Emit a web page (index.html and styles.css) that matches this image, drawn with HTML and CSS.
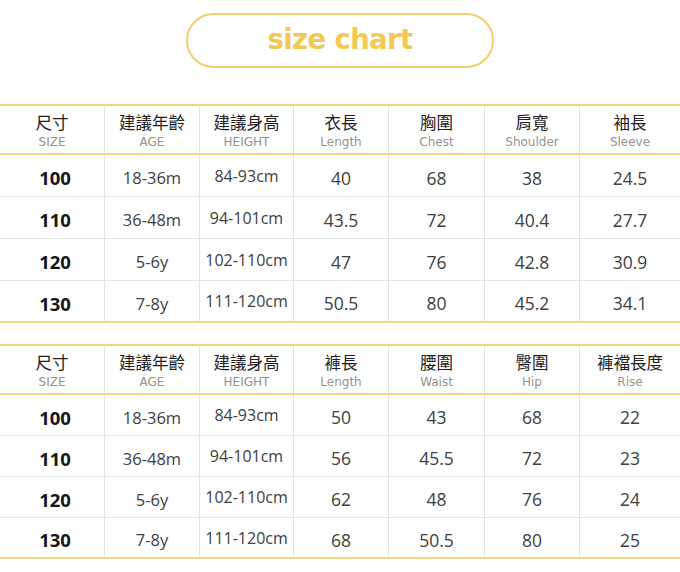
FILE: index.html
```html
<!DOCTYPE html>
<html lang="zh-Hant">
<head>
<meta charset="utf-8">
<title>size chart</title>
<link rel="stylesheet" href="styles.css">
</head>
<body>
<div class="sheet">
  <div class="title-wrap">
    <div class="pill">size chart</div>
  </div>

  <div class="chart chart-top">
    <div class="row head">
      <div class="cell"><span class="zh">尺寸</span><span class="en">SIZE</span></div>
      <div class="cell"><span class="zh">建議年齡</span><span class="en">AGE</span></div>
      <div class="cell"><span class="zh">建議身高</span><span class="en">HEIGHT</span></div>
      <div class="cell"><span class="zh">衣長</span><span class="en">Length</span></div>
      <div class="cell"><span class="zh">胸圍</span><span class="en">Chest</span></div>
      <div class="cell"><span class="zh">肩寬</span><span class="en">Shoulder</span></div>
      <div class="cell"><span class="zh">袖長</span><span class="en">Sleeve</span></div>
    </div>
    <div class="row data">
      <div class="cell size">100</div><div class="cell age">18-36m</div><div class="cell hgt">84-93cm</div><div class="cell">40</div><div class="cell">68</div><div class="cell">38</div><div class="cell">24.5</div>
    </div>
    <div class="row data">
      <div class="cell size">110</div><div class="cell age">36-48m</div><div class="cell hgt">94-101cm</div><div class="cell">43.5</div><div class="cell">72</div><div class="cell">40.4</div><div class="cell">27.7</div>
    </div>
    <div class="row data">
      <div class="cell size">120</div><div class="cell age">5-6y</div><div class="cell hgt">102-110cm</div><div class="cell">47</div><div class="cell">76</div><div class="cell">42.8</div><div class="cell">30.9</div>
    </div>
    <div class="row data">
      <div class="cell size">130</div><div class="cell age">7-8y</div><div class="cell hgt">111-120cm</div><div class="cell">50.5</div><div class="cell">80</div><div class="cell">45.2</div><div class="cell">34.1</div>
    </div>
  </div>

  <div class="chart chart-bottom">
    <div class="row head">
      <div class="cell"><span class="zh">尺寸</span><span class="en">SIZE</span></div>
      <div class="cell"><span class="zh">建議年齡</span><span class="en">AGE</span></div>
      <div class="cell"><span class="zh">建議身高</span><span class="en">HEIGHT</span></div>
      <div class="cell"><span class="zh">褲長</span><span class="en">Length</span></div>
      <div class="cell"><span class="zh">腰圍</span><span class="en">Waist</span></div>
      <div class="cell"><span class="zh">臀圍</span><span class="en">Hip</span></div>
      <div class="cell"><span class="zh">褲襠長度</span><span class="en">Rise</span></div>
    </div>
    <div class="row data">
      <div class="cell size">100</div><div class="cell age">18-36m</div><div class="cell hgt">84-93cm</div><div class="cell">50</div><div class="cell">43</div><div class="cell">68</div><div class="cell">22</div>
    </div>
    <div class="row data">
      <div class="cell size">110</div><div class="cell age">36-48m</div><div class="cell hgt">94-101cm</div><div class="cell">56</div><div class="cell">45.5</div><div class="cell">72</div><div class="cell">23</div>
    </div>
    <div class="row data">
      <div class="cell size">120</div><div class="cell age">5-6y</div><div class="cell hgt">102-110cm</div><div class="cell">62</div><div class="cell">48</div><div class="cell">76</div><div class="cell">24</div>
    </div>
    <div class="row data">
      <div class="cell size">130</div><div class="cell age">7-8y</div><div class="cell hgt">111-120cm</div><div class="cell">68</div><div class="cell">50.5</div><div class="cell">80</div><div class="cell">25</div>
    </div>
  </div>
</div>
</body>
</html>
```

FILE: styles.css
```css
* { box-sizing: border-box; }

html, body {
  margin: 0;
  padding: 0;
  background: #ffffff;
}

.sheet {
  width: 680px;
  height: 572px;
  overflow: hidden;
  font-family: "Open Sans", "Noto Sans CJK TC", sans-serif;
}

.title-wrap {
  height: 104px;
  padding-top: 13px;
  display: flex;
  justify-content: center;
}

.pill {
  width: 308px;
  height: 55px;
  border: 2.5px solid #f1cf6c;
  border-radius: 28px;
  display: flex;
  align-items: center;
  justify-content: center;
  font-family: "DejaVu Sans", sans-serif;
  font-weight: bold;
  font-size: 27.5px;
  letter-spacing: -0.6px;
  color: #f3c853;
  padding-bottom: 4px;
}

.chart {
  border-top: 2px solid #f4d584;
  border-bottom: 2px solid #f4d584;
}

.chart-bottom {
  margin-top: 21px;
}

.row {
  display: grid;
  grid-template-columns: 104px 95px 94px 95px 96px 95px 1fr;
}

.row.head {
  height: 49px;
  border-bottom: 2px solid #f4d584;
}

.row.data {
  height: 42px;
  border-bottom: 1px solid #e6e6e6;
}

.chart-bottom .row.data {
  height: 41px;
}

.row.data:last-child {
  border-bottom: none;
  height: 40px;
}

.chart-bottom .row.data:last-child {
  height: 39px;
}

.cell {
  border-left: 1px solid #e3e3e3;
  display: flex;
  flex-direction: column;
  align-items: center;
  justify-content: center;
}

.cell:first-child {
  border-left: none;
}

.head .cell {
  justify-content: flex-start;
  padding-top: 6px;
}

.zh {
  font-family: "Noto Sans CJK TC", sans-serif;
  font-size: 16.5px;
  line-height: 20px;
  color: #1e1e1e;
}

.en {
  font-family: "DejaVu Sans", sans-serif;
  font-size: 12px;
  line-height: 21px;
  color: #939393;
}

.data .cell {
  font-size: 17.5px;
  color: #404040;
  padding-top: 4px;
}

.data .cell.age {
  font-size: 16.5px;
}

.data .cell.hgt {
  font-size: 16px;
  padding-top: 0;
}

.data .cell.size {
  font-weight: 700;
  font-size: 18.5px;
  color: #161616;
  padding-left: 6px;
}
```
